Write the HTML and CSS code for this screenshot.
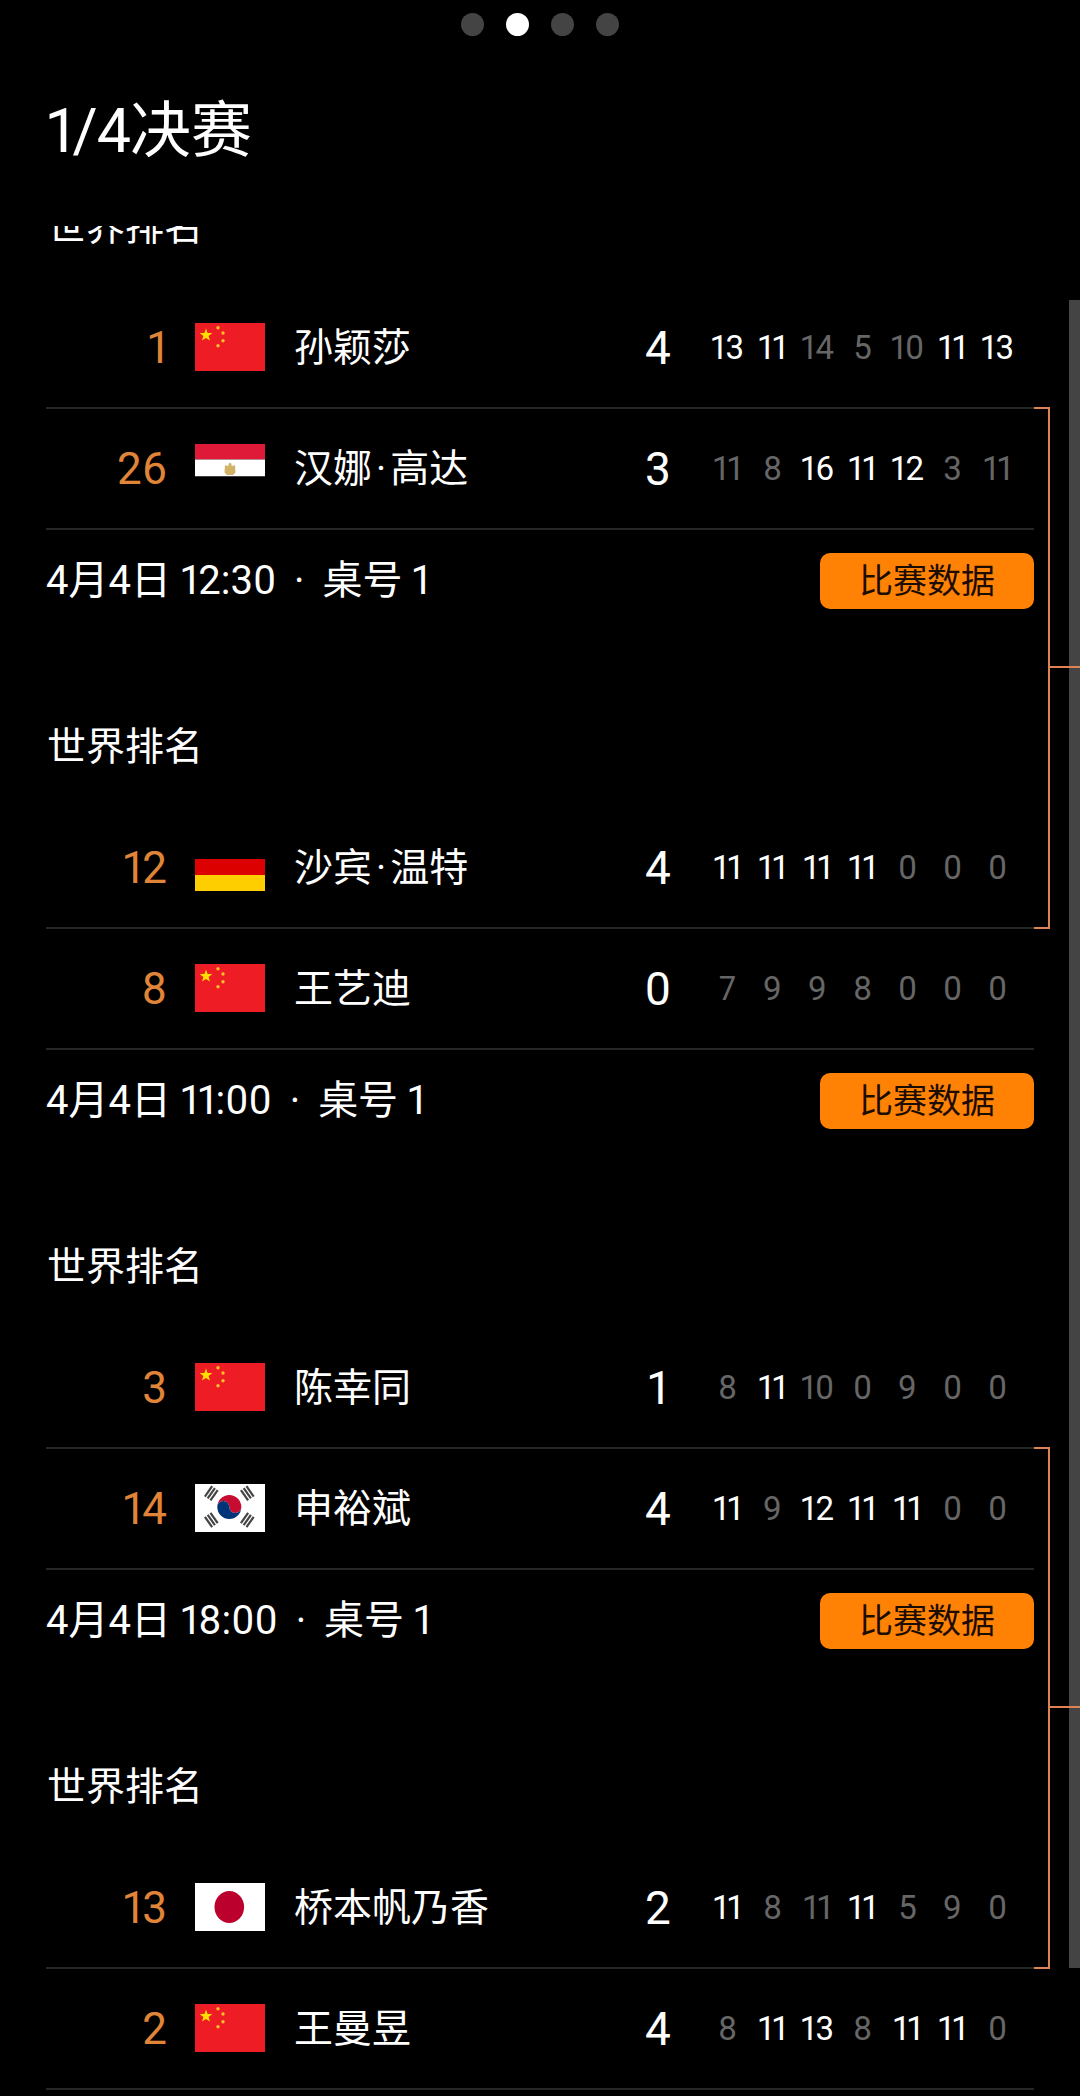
FILE: index.html
```html
<!DOCTYPE html>
<html lang="zh-CN">
<head>
  <meta charset="UTF-8">
  <title>1/4决赛</title>
  <link rel="stylesheet" href="styles.css">
</head>
<body>

  <svg class="defs" width="0" height="0">
    <symbol id="flag-cn" viewBox="0 0 70 48">
      <rect width="70" height="48" fill="#ee1c25"/>
      <polygon fill="#ffde00" points="11,5.500 12.600,10 17.400,10.100 13.600,13 15,17.600 11,14.900 7,17.600 8.400,13 4.600,10.100 9.400,10"/>
      <circle cx="23" cy="4.700" r="1.700" fill="#fbc02a"/>
      <circle cx="28" cy="10" r="1.700" fill="#fbc02a"/>
      <circle cx="28" cy="17.700" r="1.700" fill="#fbc02a"/>
      <circle cx="23" cy="22.700" r="1.700" fill="#fbc02a"/>
    </symbol>
    <symbol id="flag-eg" viewBox="0 0 70 48">
      <rect width="70" height="15.500" fill="#de1a38"/>
      <rect y="15.500" width="70" height="17" fill="#fff"/>
      <rect y="32.500" width="70" height="15.500" fill="#000"/>
      <path fill="#d2b266" d="M35 18.500l1.500 1.500v2l3.500-.8.500 7.300-2.500 2.500h-6l-2.500-2.500.5-7.300 3.500.8v-2z"/>
    </symbol>
    <symbol id="flag-de" viewBox="0 0 70 48">
      <rect width="70" height="16" fill="#000"/>
      <rect y="16" width="70" height="16" fill="#dd0000"/>
      <rect y="32" width="70" height="16" fill="#ffce00"/>
    </symbol>
    <symbol id="flag-kr" viewBox="0 0 70 48">
      <rect width="70" height="48" fill="#fff"/>
      <path fill="#c60c30" d="M22.300 23a12 12 0 0 1 24 0c0 3-2.700 6-6 6s-6-3-6-6-2.700-6-6-6-6 3-6 6z"/>
      <path fill="#003478" d="M22.300 23c0-3 2.700-6 6-6s6 3 6 6 2.700 6 6 6 6-3 6-6a12 12 0 0 1-24 0z"/>
      <g fill="#444">
        <g transform="rotate(-55 16.300 9.300)"><rect x="10" y="4.800" width="12.600" height="2.200"/><rect x="10" y="8.200" width="12.600" height="2.200"/><rect x="10" y="11.600" width="12.600" height="2.200"/></g>
        <g transform="rotate(55 52.300 9.300)"><rect x="46" y="4.800" width="12.600" height="2.200"/><rect x="46" y="8.200" width="12.600" height="2.200"/><rect x="46" y="11.600" width="12.600" height="2.200"/></g>
        <g transform="rotate(55 16.300 36)"><rect x="10" y="31.500" width="12.600" height="2.200"/><rect x="10" y="34.900" width="12.600" height="2.200"/><rect x="10" y="38.300" width="12.600" height="2.200"/></g>
        <g transform="rotate(-55 52.300 36)"><rect x="46" y="31.500" width="12.600" height="2.200"/><rect x="46" y="34.900" width="12.600" height="2.200"/><rect x="46" y="38.300" width="12.600" height="2.200"/></g>
      </g>
    </symbol>
    <symbol id="flag-jp" viewBox="0 0 70 48">
      <rect width="70" height="48" fill="#fff"/>
      <ellipse cx="34.300" cy="24" rx="14.800" ry="16" fill="#bc002d"/>
    </symbol>
  </svg>

  <div class="page">
    <div class="dots">
      <span class="dot"></span>
      <span class="dot active"></span>
      <span class="dot"></span>
      <span class="dot"></span>
    </div>
    <h1 class="title"><span class="round">1/4</span>决赛</h1>

    <div class="scroll">
      <div class="list">

        <div class="match">
          <div class="label">世界排名</div>
          <div class="row">
            <span class="rank">1</span>
            <svg class="flag"><use href="#flag-cn"/></svg>
            <span class="name">孙颖莎</span>
            <span class="wins">4</span>
            <div class="sets"><b>13</b><b>11</b><i>14</i><i>5</i><i>10</i><b>11</b><b>13</b></div>
          </div>
          <div class="row">
            <span class="rank">26</span>
            <svg class="flag"><use href="#flag-eg"/></svg>
            <span class="name">汉娜<span class="sep">·</span>高达</span>
            <span class="wins">3</span>
            <div class="sets"><i>11</i><i>8</i><b>16</b><b>11</b><b>12</b><i>3</i><i>11</i></div>
          </div>
          <div class="info">
            <span class="when">4月4日 12:30 <span class="sep2">·</span> 桌号 1</span>
            <a class="stats">比赛数据</a>
          </div>
        </div>

        <div class="match">
          <div class="label">世界排名</div>
          <div class="row">
            <span class="rank">12</span>
            <svg class="flag"><use href="#flag-de"/></svg>
            <span class="name">沙宾<span class="sep">·</span>温特</span>
            <span class="wins">4</span>
            <div class="sets"><b>11</b><b>11</b><b>11</b><b>11</b><i>0</i><i>0</i><i>0</i></div>
          </div>
          <div class="row">
            <span class="rank">8</span>
            <svg class="flag"><use href="#flag-cn"/></svg>
            <span class="name">王艺迪</span>
            <span class="wins">0</span>
            <div class="sets"><i>7</i><i>9</i><i>9</i><i>8</i><i>0</i><i>0</i><i>0</i></div>
          </div>
          <div class="info">
            <span class="when">4月4日 11:00 <span class="sep2">·</span> 桌号 1</span>
            <a class="stats">比赛数据</a>
          </div>
        </div>

        <div class="match">
          <div class="label">世界排名</div>
          <div class="row">
            <span class="rank">3</span>
            <svg class="flag"><use href="#flag-cn"/></svg>
            <span class="name">陈幸同</span>
            <span class="wins">1</span>
            <div class="sets"><i>8</i><b>11</b><i>10</i><i>0</i><i>9</i><i>0</i><i>0</i></div>
          </div>
          <div class="row">
            <span class="rank">14</span>
            <svg class="flag"><use href="#flag-kr"/></svg>
            <span class="name">申裕斌</span>
            <span class="wins">4</span>
            <div class="sets"><b>11</b><i>9</i><b>12</b><b>11</b><b>11</b><i>0</i><i>0</i></div>
          </div>
          <div class="info">
            <span class="when">4月4日 18:00 <span class="sep2">·</span> 桌号 1</span>
            <a class="stats">比赛数据</a>
          </div>
        </div>

        <div class="match">
          <div class="label">世界排名</div>
          <div class="row">
            <span class="rank">13</span>
            <svg class="flag"><use href="#flag-jp"/></svg>
            <span class="name">桥本帆乃香</span>
            <span class="wins">2</span>
            <div class="sets"><b>11</b><i>8</i><i>11</i><b>11</b><i>5</i><i>9</i><i>0</i></div>
          </div>
          <div class="row">
            <span class="rank">2</span>
            <svg class="flag"><use href="#flag-cn"/></svg>
            <span class="name">王曼昱</span>
            <span class="wins">4</span>
            <div class="sets"><i>8</i><b>11</b><b>13</b><i>8</i><b>11</b><b>11</b><i>0</i></div>
          </div>
        </div>

      </div>
    </div>

    <div class="scrollbar"></div>
    <div class="bracket first"></div>
    <div class="bracket second"></div>
  </div>

</body>
</html>
```

FILE: styles.css
```css
* {
  box-sizing: border-box;
}
html, body {
  margin: 0;
  background: #000;
}
body {
  font-family: Roboto, "Noto Sans CJK SC", sans-serif;
  font-variant-numeric: proportional-nums;
  color: #fff;
}
.defs {
  position: absolute;
}
.page {
  position: relative;
  width: 1080px;
  height: 2096px;
  overflow: hidden;
  display: flex;
  flex-direction: column;
}

/* pager + heading */
.dots {
  display: flex;
  justify-content: center;
  gap: 22px;
  padding-top: 13px;
  height: 36px;
}
.dot {
  width: 23px;
  height: 23px;
  border-radius: 50%;
  background: #444;
}
.dot.active {
  background: #fff;
}
.title {
  margin: 0;
  height: 190px;
  padding: 56px 0 0 47px;
  font-size: 61px;
  line-height: 78px;
  font-weight: 400;
}
.round {
  letter-spacing: -1px;
}

/* list is scrolled a bit, so the first label is cut by the top edge */
.scroll {
  flex: 1;
  overflow: hidden;
}
.list {
  margin-top: -30px;
}
.label {
  height: 60px;
  margin: 0 0 32px 47px;
  font-size: 39px;
  line-height: 62px;
}
.match + .match .label {
  margin-top: 82px;
}

.row {
  display: flex;
  align-items: center;
  height: 121px;
  margin: 0 46px;
  border-bottom: 2px solid #262626;
}
.rank {
  width: 121px;
  text-align: right;
  font-size: 44px;
  color: #e08538;
}
.flag {
  width: 70px;
  height: 48px;
  margin: 0 0 2px 28px;
}
.name {
  width: 350px;
  margin-left: 29px;
  padding-bottom: 8px;
  font-size: 39px;
}
.sep {
  margin: 0 4px;
}
.wins {
  width: 60px;
  margin-left: -16px;
  text-align: center;
  font-size: 46px;
}
.sets {
  display: flex;
  margin-left: 17px;
}
.sets b, .sets i {
  width: 45px;
  text-align: center;
  font-size: 33px;
  font-style: normal;
  font-weight: 400;
}
.sets i {
  color: #666;
}

.info {
  display: flex;
  align-items: center;
  justify-content: space-between;
  height: 104px;
  margin: 0 46px;
  padding-bottom: 2px;
}
.when {
  padding-bottom: 8px;
  font-size: 40px;
}
.sep2 {
  margin: 0 8px;
}
.stats {
  width: 214px;
  height: 56px;
  border-radius: 10px;
  background: #ff8205;
  color: #1c0d00;
  text-align: center;
  font-size: 34px;
  line-height: 56px;
}

/* bits on top of the list */
.scrollbar {
  position: absolute;
  top: 300px;
  right: 0;
  width: 11px;
  height: 1668px;
  background: #444;
}
.bracket {
  position: absolute;
  left: 1034px;
  width: 16px;
  height: 522px;
  border: solid #df8354;
  border-width: 2px 2px 2px 0;
}
.bracket::after {
  content: "";
  position: absolute;
  left: 14px;
  top: 257px;
  width: 32px;
  height: 2px;
  background: #df8354;
}
.bracket.first {
  top: 407px;
}
.bracket.second {
  top: 1447px;
}
```
